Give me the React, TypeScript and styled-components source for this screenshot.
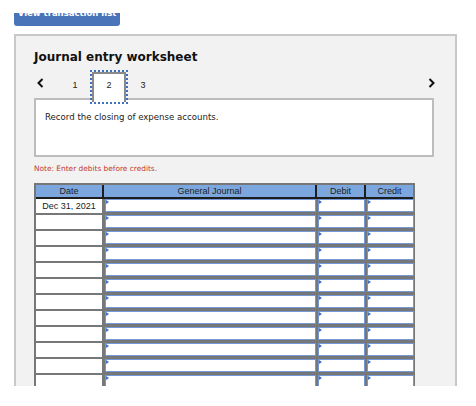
import React from 'react'
import styled, { createGlobalStyle } from 'styled-components'

const GlobalStyle = createGlobalStyle`
  html, body {
    margin: 0;
    padding: 0;
    background: #fff;
  }
`

const Page = styled.div`
  height: 386px;
  overflow: hidden;
  padding-left: 14px;
  font-family: "DejaVu Sans", Verdana, sans-serif;
`

const TopButton = styled.div`
  margin-top: 13px;
  width: 106px;
  height: 13px;
  overflow: hidden;
  background: #4a74ba;
  border-radius: 0 0 3px 3px;
  color: #fff;
  text-align: center;
`

const TopButtonLabel = styled.div`
  margin-top: -5px;
  font-size: 8.5px;
  font-weight: bold;
  line-height: 11px;
`

const Panel = styled.div`
  margin-top: 8px;
  width: 443px;
  box-sizing: border-box;
  border: 2px solid #c8c8c8;
  background: #f2f2f2;
  padding: 12px 21px 0 18px;
  height: 420px;
`

const Title = styled.h1`
  margin: 0;
  font-size: 12px;
  font-weight: bold;
  color: #111;
  line-height: 18px;
`

const NavRow = styled.div`
  display: flex;
  align-items: stretch;
  height: 28px;
  margin-top: 6px;
  margin-bottom: -2px;
`

const Arrow = styled.div<{ $right?: boolean }>`
  width: 24px;
  display: flex;
  align-items: flex-start;
  justify-content: ${p => (p.$right ? 'flex-end' : 'flex-start')};
  padding: 6px 3px 0;
  box-sizing: border-box;
  margin-left: ${p => (p.$right ? 'auto' : '0')};
  margin-right: ${p => (p.$right ? '-4px' : '0')};
`

const Tab = styled.div<{ $active?: boolean }>`
  position: relative;
  width: 34px;
  box-sizing: border-box;
  display: flex;
  align-items: flex-start;
  justify-content: center;
  padding-top: 6px;
  font-family: "Liberation Sans", Arial, sans-serif;
  font-size: 9px;
  line-height: 10px;
  color: #222;
  background: ${p => (p.$active ? '#fff' : 'transparent')};
  border: 2px solid ${p => (p.$active ? '#8a8a8a' : 'transparent')};
  border-bottom: none;
  height: ${p => (p.$active ? '30px' : '28px')};
  outline: ${p => (p.$active ? '2px dotted #3e70c2' : 'none')};
  z-index: 1;
`

const Prompt = styled.div`
  width: 400px;
  height: 59px;
  box-sizing: border-box;
  border: 2px solid #bdbdbd;
  background: #fff;
  padding: 12px 9px;
  font-size: 8.6px;
  line-height: 11px;
  color: #222;
`

const Note = styled.div`
  margin-top: 7px;
  font-size: 7.4px;
  color: #c0392b;
  line-height: 10px;
`

const Table = styled.div`
  margin-top: 9px;
  width: 381px;
  box-sizing: border-box;
  border: 2px solid #777;
  border-bottom: none;
  font-family: "Liberation Sans", Arial, sans-serif;
  font-size: 9px;
  color: #222;
`

const HeaderRow = styled.div`
  display: grid;
  grid-template-columns: 66px 211px 47px 47px;
  column-gap: 2px;
  background: #1d1d1d;
  border-bottom: 2px solid #1d1d1d;
`

const HeaderCell = styled.div`
  height: 12px;
  line-height: 12px;
  background: #7ca7de;
  text-align: center;
`

const BodyRow = styled.div`
  display: grid;
  grid-template-columns: 66px 211px 47px 47px;
  column-gap: 2px;
  height: 16px;
  background: #777;
  align-items: start;
`

const DateCell = styled.div`
  height: 14px;
  line-height: 14px;
  background: #fff;
  text-align: center;
`

const InputCell = styled.div`
  position: relative;
  height: 13px;
  margin-left: 1px;
  margin-right: -1px;
  background: #fff;
  border: 1px solid #7398d6;
  box-sizing: border-box;

  &::before {
    content: '';
    position: absolute;
    left: 0;
    top: 0;
    border-top: 2px solid transparent;
    border-bottom: 2px solid transparent;
    border-left: 3px solid #3d6fc4;
  }
`

const Chevron = ({ dir }: { dir: 'left' | 'right' }) => (
  <svg width="7" height="10" viewBox="0 0 7 10">
    <polyline
      points={dir === 'left' ? '5.5,1 1.5,5 5.5,9' : '1.5,1 5.5,5 1.5,9'}
      fill="none"
      stroke="#111"
      strokeWidth="2"
    />
  </svg>
)

const rows = Array.from({ length: 12 }, (_, i) => i)

const App = () => (
  <Page>
    <GlobalStyle />
    <TopButton>
      <TopButtonLabel>View transaction list</TopButtonLabel>
    </TopButton>
    <Panel>
      <Title>Journal entry worksheet</Title>
      <NavRow>
        <Arrow>
          <Chevron dir="left" />
        </Arrow>
        <Tab>1</Tab>
        <Tab $active>2</Tab>
        <Tab>3</Tab>
        <Arrow $right>
          <Chevron dir="right" />
        </Arrow>
      </NavRow>
      <Prompt>Record the closing of expense accounts.</Prompt>
      <Note>Note: Enter debits before credits.</Note>
      <Table>
        <HeaderRow>
          <HeaderCell>Date</HeaderCell>
          <HeaderCell>General Journal</HeaderCell>
          <HeaderCell>Debit</HeaderCell>
          <HeaderCell>Credit</HeaderCell>
        </HeaderRow>
        {rows.map(i => (
          <BodyRow key={i}>
            <DateCell>{i === 0 ? 'Dec 31, 2021' : ''}</DateCell>
            <InputCell />
            <InputCell />
            <InputCell />
          </BodyRow>
        ))}
      </Table>
    </Panel>
  </Page>
)

export default App
